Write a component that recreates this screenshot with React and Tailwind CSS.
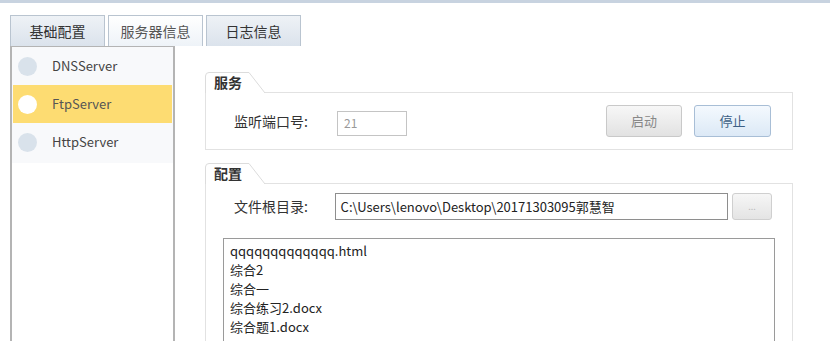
import React from "react";

const font = { fontFamily: '"Microsoft YaHei", "Noto Sans CJK SC", "Noto Sans", sans-serif' };

const tabs = ["基础配置", "服务器信息", "日志信息"];
const servers = ["DNSServer", "FtpServer", "HttpServer"];
const files = ["qqqqqqqqqqqqq.html", "综合2", "综合一", "综合练习2.docx", "综合题1.docx"];

const GroupHeader = ({ title }) => (
  <div className="relative h-[20px] w-[62px] pl-[9px] text-[14px] font-bold leading-[20px] text-[#333]">
    <svg className="absolute left-0 top-0" width="62" height="21" viewBox="0 0 62 21">
      <path d="M0.5 21 V4 Q0.5 0.5 4 0.5 H44 L60 21" fill="#fff" stroke="#dcdcdc" />
    </svg>
    <span className="relative">{title}</span>
  </div>
);

export default function App() {
  return (
    <div className="w-[830px] h-[341px] overflow-hidden bg-white text-[#333]" style={font}>
      <div className="h-[3px] bg-[#c8d3e0]" />
      <div className="mt-[12px] flex gap-[3px] pl-[10px]">
        {tabs.map((t, i) => (
          <div
            key={t}
            className={
              "flex h-[31px] w-[95px] items-center justify-center border border-b-0 border-[#b9c4d0] text-[14px] " +
              (i === 1
                ? "bg-gradient-to-b from-[#ffffff] to-[#eef3f8] text-[#555]"
                : "bg-gradient-to-b from-[#eef2f6] to-[#dbe3ec] text-[#333]")
            }
          >
            {t}
          </div>
        ))}
      </div>
      <div className="flex">
        <div className="ml-[10px] h-[300px] w-[165px] border-x-2 border-t border-[#b4b4b4] bg-white">
          <div className="bg-[#f8f9fb] pb-[2px]">
            {servers.map((s, i) => (
              <div
                key={s}
                className={
                  "mx-[1px] flex h-[38px] items-center gap-[15px] pl-[5px] text-[13px] " +
                  (i === 1 ? "bg-[#fddc72] text-[#555]" : "text-[#444]")
                }
              >
                <div className={"h-[19px] w-[19px] rounded-full " + (i === 1 ? "bg-white" : "bg-[#d9e2eb]")} />
                <span>{s}</span>
              </div>
            ))}
          </div>
        </div>
        <div className="flex-1 pl-[30px] pt-[26px]">
          <GroupHeader title="服务" />
          <div className="flex h-[58px] w-[588px] items-center border border-[#e2e2e2] pl-[28px] pr-[21px]">
            <span className="w-[103px] text-[14px]">监听端口号:</span>
            <div className="mt-[4px] flex h-[25px] w-[70px] items-center border border-[#c4c4c4] pl-[6px] text-[12px] text-[#999]">
              21
            </div>
            <div className="flex-1" />
            <button className="mr-[12px] h-[32px] w-[76px] rounded-[3px] border border-[#c9c9c9] bg-gradient-to-b from-[#f7f7f7] to-[#e2e2e2] text-[13px] text-[#888]">
              启动
            </button>
            <button className="h-[32px] w-[77px] rounded-[3px] border border-[#a8bed6] bg-gradient-to-b from-[#f4f9fe] to-[#dce9f6] text-[13px] text-[#3d5f85]">
              停止
            </button>
          </div>
          <div className="mt-[13px]">
            <GroupHeader title="配置" />
          </div>
          <div className="h-[200px] w-[588px] border border-[#e2e2e2] pl-[17px] pr-[20px]">
            <div className="mt-[9px] flex items-center">
              <span className="w-[112px] pl-[11px] text-[14px]">文件根目录:</span>
              <div className="flex h-[27px] w-[395px] items-center border border-[#8e8e8e] pl-[5px] text-[13px] text-[#222]">
                C:\Users\lenovo\Desktop\20171303095郭慧智
              </div>
              <button className="ml-[4px] h-[27px] w-[40px] rounded-[3px] border border-[#cfcfcf] bg-gradient-to-b from-[#f6f6f6] to-[#e4e4e4] text-[9px] leading-[10px] text-[#bbb]">
                ...
              </button>
            </div>
            <div className="mt-[18px] h-[120px] w-[552px] border border-[#9a9a9a] pl-[6px] pt-[2px]">
              {files.map((f) => (
                <div key={f} className="h-[19px] text-[13px] leading-[19px] text-[#222]">
                  {f}
                </div>
              ))}
            </div>
          </div>
        </div>
      </div>
    </div>
  );
}
